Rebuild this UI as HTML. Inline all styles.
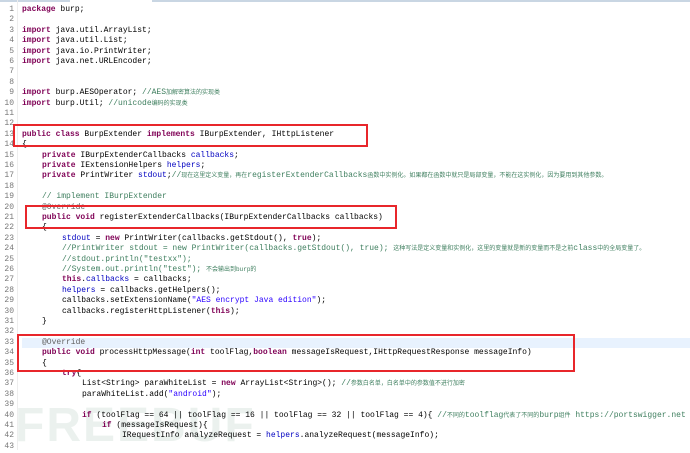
<!DOCTYPE html>
<html><head><meta charset="utf-8"><style>
body{margin:0;width:690px;height:450px;overflow:hidden;background:#fff;position:relative;font-family:"Liberation Mono","Noto Sans CJK SC",monospace;font-size:8px;}
.top1{position:absolute;left:0;top:0;width:70px;height:2px;background:#c9d6e3}
.top2{position:absolute;left:152px;top:0;width:538px;height:2px;background:#c9d6e3}
.gut{position:absolute;left:17px;top:0;width:1px;height:450px;background:#eee}
.ln{position:absolute;left:0;width:14px;text-align:right;color:#787878;height:10.4px;line-height:10.4px}
.c{position:absolute;white-space:pre;height:10.4px;line-height:10.4px;color:#000}
.k{color:#7f0055;font-weight:bold}
.f{color:#0000c0}
.cm{color:#3f7f5f}
.s{color:#2a00ff}
.a{color:#646464}
.z{font-size:6px}
.box{position:absolute;border:2px solid #e8262b;box-sizing:border-box}
.hl{position:absolute;left:22px;top:338px;width:668px;height:10px;background:#e8f2fe}
.wm{position:absolute;left:15px;top:398px;font:bold 48px "Liberation Sans",sans-serif;color:#dfe9e4;letter-spacing:2px;opacity:.6}
</style></head><body>
<div class="top1"></div><div class="top2"></div>
<div class="hl"></div>
<div class="wm">FREEBUF</div>
<div class="gut"></div>
<div id="code"></div>
<div class="box" style="left:13px;top:124px;width:355px;height:23px"></div>
<div class="box" style="left:25px;top:205px;width:372px;height:24px"></div>
<div class="box" style="left:17px;top:334px;width:558px;height:38px"></div>
<script>
var L=[
[0,'<span class="k">package</span> burp;'],
[0,''],
[0,'<span class="k">import</span> java.util.ArrayList;'],
[0,'<span class="k">import</span> java.util.List;'],
[0,'<span class="k">import</span> java.io.PrintWriter;'],
[0,'<span class="k">import</span> java.net.URLEncoder;'],
[0,''],[0,''],
[0,'<span class="k">import</span> burp.AESOperator; <span class="cm">//AES<span class="z">加解密算法的实现类</span></span>'],
[0,'<span class="k">import</span> burp.Util; <span class="cm">//unicode<span class="z">编码的实现类</span></span>'],
[0,''],[0,''],
[0,'<span class="k">public class</span> BurpExtender <span class="k">implements</span> IBurpExtender, IHttpListener'],
[0,'{'],
[20,'<span class="k">private</span> IBurpExtenderCallbacks <span class="f">callbacks</span>;'],
[20,'<span class="k">private</span> IExtensionHelpers <span class="f">helpers</span>;'],
[20,'<span class="k">private</span> PrintWriter <span class="f">stdout</span>;<span class="cm">//<span class="z">现在这里定义变量，再在</span>registerExtenderCallbacks<span class="z">函数中实例化。如果都在函数中就只是局部变量，不能在这实例化，因为要用到其他参数。</span></span>'],
[0,''],
[20,'<span class="cm">// implement IBurpExtender</span>'],
[20,'<span class="a">@Override</span>'],
[20,'<span class="k">public void</span> registerExtenderCallbacks(IBurpExtenderCallbacks callbacks)'],
[20,'{'],
[40,'<span class="f">stdout</span> = <span class="k">new</span> PrintWriter(callbacks.getStdout(), <span class="k">true</span>);'],
[40,'<span class="cm">//PrintWriter stdout = new PrintWriter(callbacks.getStdout(), true); <span class="z">这种写法是定义变量和实例化，这里的变量就是新的变量而不是之前</span>class<span class="z">中的全局变量了。</span></span>'],
[40,'<span class="cm">//stdout.println("testxx");</span>'],
[40,'<span class="cm">//System.out.println("test"); <span class="z">不会输出到burp的</span></span>'],
[40,'<span class="k">this</span>.<span class="f">callbacks</span> = callbacks;'],
[40,'<span class="f">helpers</span> = callbacks.getHelpers();'],
[40,'callbacks.setExtensionName(<span class="s">"AES encrypt Java edition"</span>);'],
[40,'callbacks.registerHttpListener(<span class="k">this</span>);'],
[20,'}'],
[0,''],
[20,'<span class="a">@Override</span>'],
[20,'<span class="k">public void</span> processHttpMessage(<span class="k">int</span> toolFlag,<span class="k">boolean</span> messageIsRequest,IHttpRequestResponse messageInfo)'],
[20,'{'],
[40,'<span class="k">try</span>{'],
[60,'List&lt;String&gt; paraWhiteList = <span class="k">new</span> ArrayList&lt;String&gt;(); <span class="cm">//<span class="z">参数白名单，白名单中的参数值不进行加密</span></span>'],
[60,'paraWhiteList.add(<span class="s">"android"</span>);'],
[0,''],
[60,'<span class="k">if</span> (toolFlag == 64 || toolFlag == 16 || toolFlag == 32 || toolFlag == 4){ <span class="cm">//<span class="z">不同的</span>toolflag<span class="z">代表了不同的</span>burp<span class="z">组件</span> https://portswigger.net</span>'],
[80,'<span class="k">if</span> (messageIsRequest){'],
[100,'IRequestInfo analyzeRequest = <span class="f">helpers</span>.analyzeRequest(messageInfo);'],
[0,'']
];
var h='';
for(var i=0;i<L.length;i++){var y=5+i*10.4;
h+='<div class="ln" style="top:'+y+'px">'+(i+1)+'</div><div class="c" style="left:'+(22+L[i][0])+'px;top:'+y+'px">'+L[i][1]+'</div>';}
document.getElementById('code').innerHTML=h;
</script>
</body></html>
